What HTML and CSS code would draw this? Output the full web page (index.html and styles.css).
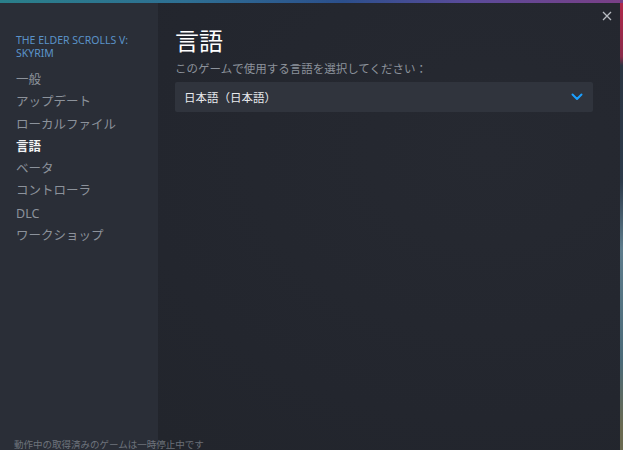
FILE: index.html
```html
<!DOCTYPE html>
<html lang="ja">
  <head>
    <meta charset="UTF-8" />
    <title>プロパティ</title>
    <link rel="stylesheet" href="styles.css">
  </head>
  <body>
    <div class="desktop-top"></div>
    <div class="screen">
      <div class="dialog">
        <div class="sidebar">
          <div class="game-title">THE ELDER SCROLLS V:<br>SKYRIM</div>
          <ul class="menu">
            <li>一般</li>
            <li>アップデート</li>
            <li>ローカルファイル</li>
            <li class="active">言語</li>
            <li>ベータ</li>
            <li>コントローラ</li>
            <li>DLC</li>
            <li>ワークショップ</li>
          </ul>
          <div class="behind-text">動作中の取得済みのゲームは一時停止中です</div>
        </div>
        <div class="content">
          <button class="close" aria-label="閉じる">
            <svg viewBox="0 0 10 10" width="10" height="10">
              <path d="M1 1L9 9M9 1L1 9" stroke="#b8bcc2" stroke-width="1.3" fill="none"/>
            </svg>
          </button>
          <h1>言語</h1>
          <p class="hint">このゲームで使用する言語を選択してください：</p>
          <div class="select">
            <span>日本語（日本語）</span>
            <svg class="chevron" viewBox="0 0 12 8" width="12" height="8">
              <path d="M1.5 1.5L6 6L10.5 1.5" stroke="#1a9fff" stroke-width="2" fill="none" stroke-linecap="round" stroke-linejoin="round"/>
            </svg>
          </div>
        </div>
      </div>
      <div class="desktop-side"></div>
    </div>
  </body>
</html>
```

FILE: styles.css
```css
body {
  margin: 0;
  padding: 0;
  width: 623px;
  height: 450px;
  overflow: hidden;
  background-color: #1c1f26;
  font-family: "Noto Sans", "Noto Sans CJK JP", sans-serif;
}

.desktop-top {
  height: 3px;
  background: linear-gradient(90deg, #2a7f8a 0%, #2e6f93 30%, #2b4f8c 55%, #5a4b9a 75%, #7a3f86 100%);
}

.screen {
  display: flex;
  height: 447px;
}

.dialog {
  width: 620px;
  display: flex;
  background-color: #23262e;
}

.desktop-side {
  width: 3px;
  background: linear-gradient(180deg, #b0284a 0%, #8a2a4a 12%, #2a3542 14%, #2c3a4a 40%, #5d7c8c 55%, #4a6a78 80%, #6a6a50 95%);
}

.sidebar {
  width: 158px;
  background-color: #2a2e37;
  padding: 31px 0 0 16px;
  box-sizing: border-box;
  position: relative;
  z-index: 1;
}

.game-title {
  color: #5b93c9;
  font-size: 10.5px;
  line-height: 13px;
  margin-bottom: 12px;
}

.menu {
  list-style: none;
  margin: 0;
  padding: 0;
}

.menu li {
  color: #8c929b;
  font-size: 12.5px;
  height: 22.3px;
  line-height: 16px;
}

.menu li.active {
  color: #f2f3f5;
  font-weight: 700;
}

.behind-text {
  position: absolute;
  left: 14px;
  top: 436px;
  font-size: 9.5px;
  line-height: 11px;
  color: #9aa0a8;
  white-space: nowrap;
  opacity: 0.6;
}

.content {
  flex: 1;
  position: relative;
  padding: 21px 27px 0 17px;
  background: radial-gradient(ellipse 500px 380px at 330px 150px, #262931 0%, #23262e 70%, #22252c 100%);
}

.close {
  position: absolute;
  top: 5px;
  right: 5px;
  width: 16px;
  height: 16px;
  padding: 0;
  border: none;
  background: none;
  display: flex;
  align-items: center;
  justify-content: center;
}

h1 {
  margin: 0;
  font-size: 24px;
  font-weight: 400;
  color: #ffffff;
  line-height: 32px;
  font-family: "Noto Sans CJK JP", sans-serif;
}

.hint {
  margin: 5px 0 0 0;
  font-size: 11.5px;
  color: #8c929b;
  line-height: 16px;
}

.select {
  margin-top: 5px;
  height: 30px;
  background-color: #30343d;
  border-radius: 2px;
  display: flex;
  align-items: center;
  justify-content: space-between;
  padding: 0 10px 0 9px;
  font-size: 11.5px;
  color: #e8eaed;
}

.chevron {
  display: block;
}
```
